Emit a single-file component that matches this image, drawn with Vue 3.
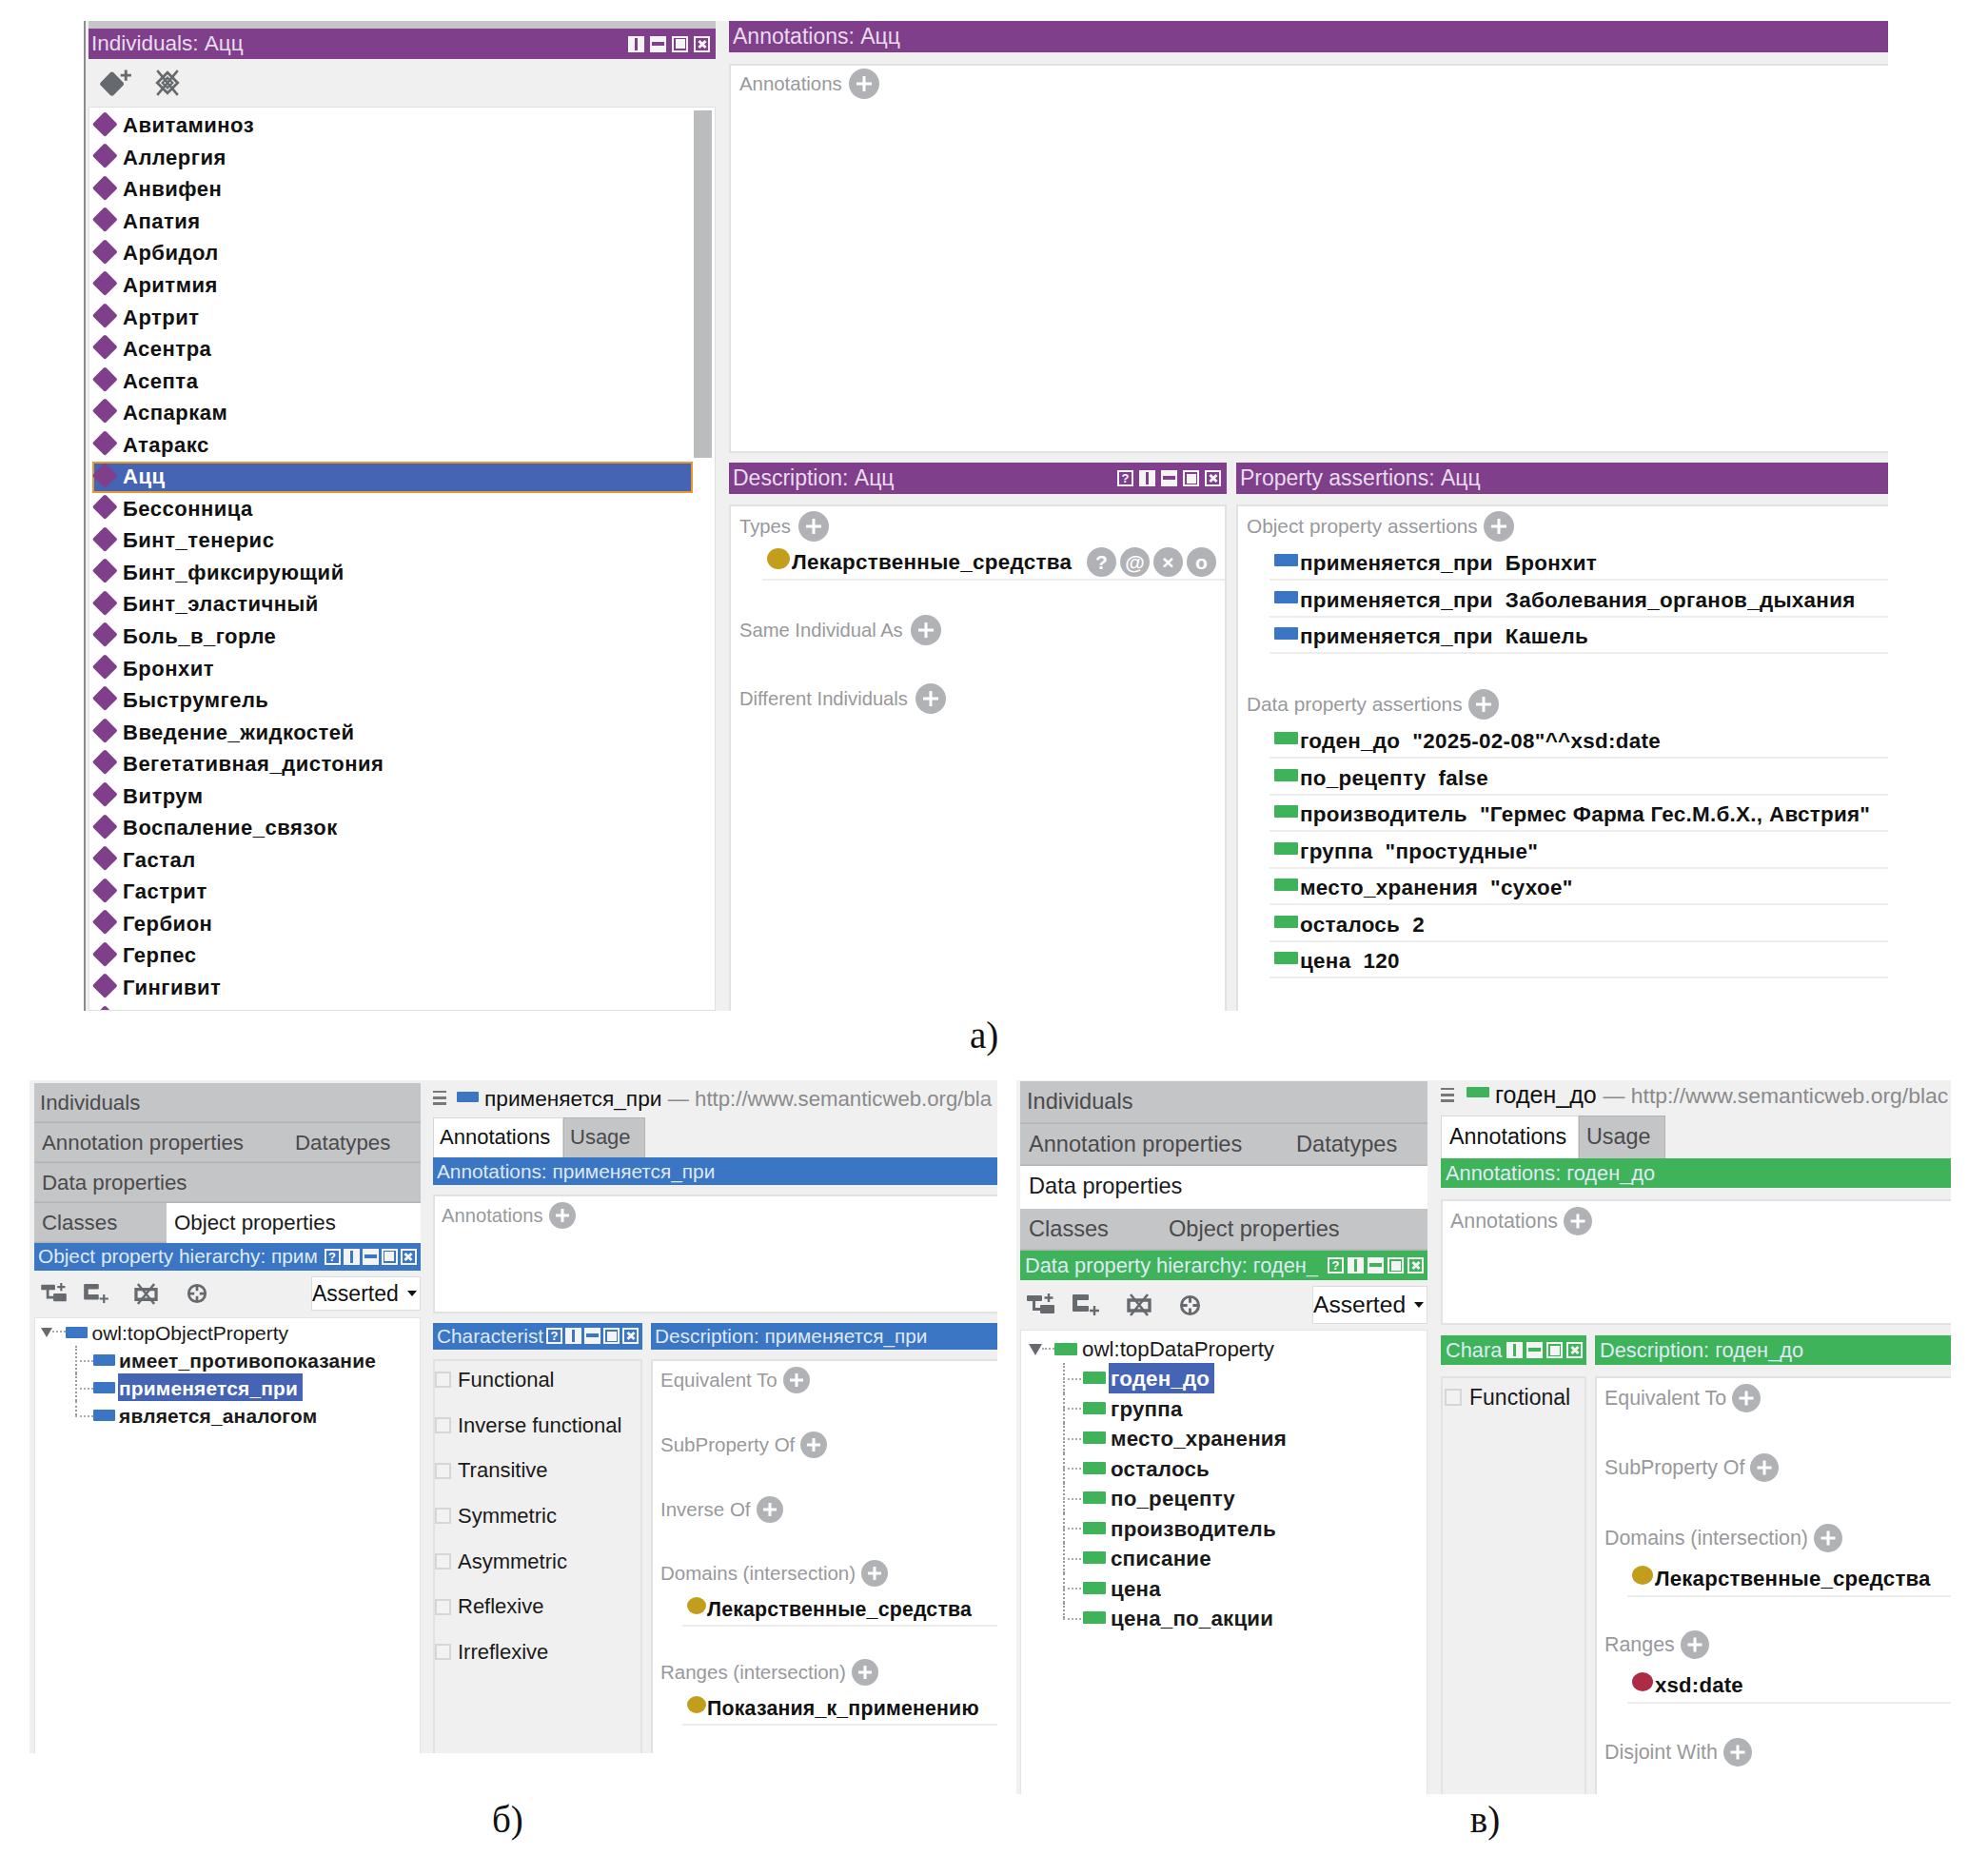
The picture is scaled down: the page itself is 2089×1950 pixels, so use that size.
<script setup>
const names = ['Авитаминоз','Аллергия','Анвифен','Апатия','Арбидол','Аритмия','Артрит','Асентра','Асепта','Аспаркам','Атаракс','Ацц','Бессонница','Бинт_тенерис','Бинт_фиксирующий','Бинт_эластичный','Боль_в_горле','Бронхит','Быструмгель','Введение_жидкостей','Вегетативная_дистония','Витрум','Воспаление_связок','Гастал','Гастрит','Гербион','Герпес','Гингивит','']

const dot = (t, kind = 'gold') => ({ kind, name: t })
const typePanel = [
  { label: 'Types', mt: 0, items: [{ ...dot('Лекарственные_средства'), btns: ['?', '@', '×', 'o'] }] },
  { label: 'Same Individual As', mt: 36, items: [] },
  { label: 'Different Individuals', mt: 40, items: [] }
]
const op = v => ({ kind: 'bar blue', name: 'применяется_при', val: v })
const dp = (n, v) => ({ kind: 'bar green', name: n, val: v })
const propPanel = [
  { label: 'Object property assertions', mt: 0, items: [op('Бронхит'), op('Заболевания_органов_дыхания'), op('Кашель')] },
  { label: 'Data property assertions', mt: 37, items: [dp('годен_до', '"2025-02-08"^^xsd:date'), dp('по_рецепту', 'false'), dp('производитель', '"Гермес Фарма Гес.М.б.Х., Австрия"'), dp('группа', '"простудные"'), dp('место_хранения', '"сухое"'), dp('осталось', '2'), dp('цена', '120')] }
]

const figs = [
  {
    cls: 'fig-b',
    tabs: [
      [{ t: 'Individuals' }],
      [{ t: 'Annotation properties', w: 266 }, { t: 'Datatypes' }],
      [{ t: 'Data properties' }],
      [{ t: 'Classes', w: 139 }, { t: 'Object properties', on: true }]
    ],
    hier: 'Object property hierarchy: прим',
    root: 'owl:topObjectProperty',
    barCls: 'blue',
    kids: ['имеет_противопоказание', 'применяется_при', 'является_аналогом'],
    sel: 'применяется_при',
    title: 'применяется_при',
    url: 'http://www.semanticweb.org/bla',
    charTitle: 'Characterist',
    charBtns: ['q', 'v', 'h', 'm', 'x'],
    chars: ['Functional', 'Inverse functional', 'Transitive', 'Symmetric', 'Asymmetric', 'Reflexive', 'Irreflexive'],
    secs: [
      { label: 'Equivalent To', mt: 0, items: [] },
      { label: 'SubProperty Of', mt: 38, items: [] },
      { label: 'Inverse Of', mt: 38, items: [] },
      { label: 'Domains (intersection)', mt: 37, items: [dot('Лекарственные_средства')] },
      { label: 'Ranges (intersection)', mt: 33, items: [dot('Показания_к_применению')] }
    ]
  },
  {
    cls: 'fig-v',
    tabs: [
      [{ t: 'Individuals' }],
      [{ t: 'Annotation properties', w: 281 }, { t: 'Datatypes' }],
      [{ t: 'Data properties', on: true }],
      [{ t: 'Classes', w: 147 }, { t: 'Object properties' }]
    ],
    hier: 'Data property hierarchy: годен_',
    root: 'owl:topDataProperty',
    barCls: 'green',
    kids: ['годен_до', 'группа', 'место_хранения', 'осталось', 'по_рецепту', 'производитель', 'списание', 'цена', 'цена_по_акции'],
    sel: 'годен_до',
    title: 'годен_до',
    url: 'http://www.semanticweb.org/blac',
    charTitle: 'Chara',
    charBtns: ['v', 'h', 'm', 'x'],
    chars: ['Functional'],
    secs: [
      { label: 'Equivalent To', mt: 0, items: [] },
      { label: 'SubProperty Of', mt: 43, items: [] },
      { label: 'Domains (intersection)', mt: 44, items: [dot('Лекарственные_средства')] },
      { label: 'Ranges', mt: 35, items: [dot('xsd:date', 'crimson')] },
      { label: 'Disjoint With', mt: 36, items: [] }
    ]
  }
]
const allBtns = ['v', 'h', 'm', 'x']
const qBtns = ['q', 'v', 'h', 'm', 'x']
</script>

<template>
  <div class="page">
    <div class="fig-a">
      <div class="a-left">
        <div class="strip"></div>
        <div class="hdr purple a-h1">
          <span class="hdr-t">Individuals: Ацц</span>
          <span class="wbs"><i v-for="b in allBtns" :key="b" :class="['wb', b]"></i></span>
        </div>
        <div class="a-tools">
          <svg class="t-dia" viewBox="0 0 32 26">
            <rect x="4.500" y="5.500" width="17" height="17" rx="2.500" transform="rotate(45 13 14)" fill="#666a6f" />
            <path d="M26 1v10M21 6h10" stroke="#666a6f" stroke-width="2.600" fill="none" />
          </svg>
          <svg class="t-del" viewBox="0 0 26 26">
            <path d="M13 3 23 13 13 23 3 13Z" fill="none" stroke="#666a6f" stroke-width="2.600" />
            <path d="M13 8 18 13 13 18 8 13Z" fill="none" stroke="#666a6f" stroke-width="2" />
            <path d="M3 1 23 25M23 1 3 25" stroke="#666a6f" stroke-width="2.400" />
          </svg>
        </div>
        <div class="a-list">
          <div class="a-rows">
            <div v-for="n in names" :key="n" class="a-row" :class="{ sel: n === 'Ацц' }">
              <i class="diamond"></i><span>{{ n }}</span>
            </div>
          </div>
          <div class="a-scroll"></div>
        </div>
      </div>
      <div class="a-right">
        <div class="hdr purple a-h2"><span class="hdr-t">Annotations: Ацц</span></div>
        <div class="panel a-ann">
          <div class="sec-label"><span>Annotations</span><i class="plus"></i></div>
        </div>
        <div class="a-cols">
          <div class="a-desc">
            <div class="hdr purple a-h2">
              <span class="hdr-t">Description: Ацц</span>
              <span class="wbs"><i v-for="b in qBtns" :key="b" :class="['wb', b]">{{ b === 'q' ? '?' : '' }}</i></span>
            </div>
            <div class="panel body">
              <section v-for="s in typePanel" :key="s.label" class="sec" :style="{ marginTop: s.mt + 'px' }">
                <div class="sec-label"><span>{{ s.label }}</span><i class="plus"></i></div>
                <div v-for="it in s.items" :key="it.name" class="item">
                  <i :class="it.kind"></i><b class="nm">{{ it.name }}</b>
                  <span class="rbtns"><i v-for="x in it.btns" :key="x" class="rbtn">{{ x }}</i></span>
                </div>
              </section>
            </div>
          </div>
          <div class="a-prop">
            <div class="hdr purple a-h2"><span class="hdr-t">Property assertions: Ацц</span></div>
            <div class="panel body">
              <section v-for="s in propPanel" :key="s.label" class="sec" :style="{ marginTop: s.mt + 'px' }">
                <div class="sec-label"><span>{{ s.label }}</span><i class="plus"></i></div>
                <div v-for="it in s.items" :key="it.name + it.val" class="item">
                  <i :class="it.kind"></i><b class="nm">{{ it.name }}</b><b class="val">{{ it.val }}</b>
                </div>
              </section>
            </div>
          </div>
        </div>
      </div>
    </div>
    <div class="cap cap-a">а)</div>

    <div class="row">
      <div v-for="f in figs" :key="f.cls" class="fig" :class="f.cls">
        <div class="col-l">
          <div class="tabs">
            <div v-for="(r, i) in f.tabs" :key="i" class="tab-row">
              <div v-for="c in r" :key="c.t" class="tab" :class="{ on: c.on }" :style="c.w ? { width: c.w + 'px' } : null">{{ c.t }}</div>
            </div>
          </div>
          <div class="hdr fh">
            <span class="hdr-t">{{ f.hier }}</span>
            <span class="wbs"><i v-for="b in qBtns" :key="b" :class="['wb', b]">{{ b === 'q' ? '?' : '' }}</i></span>
          </div>
          <div class="tools">
            <svg class="i1" viewBox="0 0 30 24">
              <path d="M1 2h14a1 1 0 0 1 1 1v4a1 1 0 0 1-1 1H9v7h5v-2a1 1 0 0 1 1-1h13a1 1 0 0 1 1 1v7a1 1 0 0 1-1 1H15a1 1 0 0 1-1-1v-2H6V8H1a1 1 0 0 1-1-1V3a1 1 0 0 1 1-1Z" fill="#666a6f" />
              <path d="M23 0v9M18.500 4.500h9" stroke="#666a6f" stroke-width="2.400" fill="none" />
            </svg>
            <svg class="i2" viewBox="0 0 30 24">
              <path d="M2 1h15a1 1 0 0 1 1 1v4a1 1 0 0 1-1 1H6v6h11a1 1 0 0 1 1 1v4a1 1 0 0 1-1 1H2a1 1 0 0 1-1-1V2a1 1 0 0 1 1-1Z" fill="#666a6f" />
              <path d="M24 13v10M19 18h10" stroke="#666a6f" stroke-width="2.400" fill="none" />
            </svg>
            <svg class="i3" viewBox="0 0 26 24">
              <path d="M2 7h22v11H2Z" fill="none" stroke="#666a6f" stroke-width="3.400" />
              <path d="M4 1 22 23M22 1 4 23" stroke="#666a6f" stroke-width="2.600" />
            </svg>
            <svg class="i4" viewBox="0 0 24 24">
              <circle cx="12" cy="12" r="9.500" fill="none" stroke="#666a6f" stroke-width="3" />
              <path d="M12 3v6M12 15v6M3 12h6M15 12h6" stroke="#666a6f" stroke-width="3" />
            </svg>
            <div class="combo"><span>Asserted</span><i class="caret"></i></div>
          </div>
          <div class="tree">
            <div class="root">
              <i class="tri"></i><i class="dash"></i><i class="bar" :class="f.barCls"></i><span class="root-t">{{ f.root }}</span>
            </div>
            <div v-for="k in f.kids" :key="k" class="kid">
              <i class="bar" :class="f.barCls"></i><b class="kid-t" :class="{ sel: k === f.sel }">{{ k }}</b>
            </div>
          </div>
        </div>

        <div class="col-r">
          <div class="titlebar">
            <i class="burger"></i><i class="bar" :class="f.barCls"></i>
            <span class="ttl">{{ f.title }} <span class="url">— {{ f.url }}</span></span>
          </div>
          <div class="etabs"><div class="etab on">Annotations</div><div class="etab">Usage</div></div>
          <div class="hdr fh rh"><span class="hdr-t">Annotations: {{ f.title }}</span></div>
          <div class="panel r-ann">
            <div class="sec-label"><span>Annotations</span><i class="plus"></i></div>
          </div>
          <div class="r-cols">
            <div class="r-char">
              <div class="hdr fh">
                <span class="hdr-t">{{ f.charTitle }}</span>
                <span class="wbs"><i v-for="b in f.charBtns" :key="b" :class="['wb', b]">{{ b === 'q' ? '?' : '' }}</i></span>
              </div>
              <div class="char-panel">
                <label v-for="c in f.chars" :key="c" class="chk"><i class="box"></i>{{ c }}</label>
              </div>
            </div>
            <div class="r-desc">
              <div class="hdr fh"><span class="hdr-t">Description: {{ f.title }}</span></div>
              <div class="panel body">
                <section v-for="s in f.secs" :key="s.label" class="sec" :style="{ marginTop: s.mt + 'px' }">
                  <div class="sec-label"><span>{{ s.label }}</span><i class="plus"></i></div>
                  <div v-for="it in s.items" :key="it.name" class="item">
                    <i :class="it.kind"></i><b class="nm">{{ it.name }}</b>
                  </div>
                </section>
              </div>
            </div>
          </div>
        </div>
      </div>
    </div>
    <div class="caps">
      <span class="cap cap-b">б)</span>
      <span class="cap cap-v">в)</span>
    </div>
  </div>
</template>

<style scoped>
.page {
  width: 2089px;
  height: 1950px;
  overflow: hidden;
  background: #fff;
  padding-top: 22px;
  box-sizing: border-box;
  font-family: "Liberation Sans", Arial, sans-serif;
  color: #111;
}
i { font-style: normal; display: block; flex: none; }

/* shared */
.hdr {
  display: flex;
  align-items: center;
  color: #dfe9f5;
  overflow: hidden;
  white-space: nowrap;
  flex: none;
}
.hdr-t { flex: 1; min-width: 0; overflow: hidden; }
.purple { background: #7f3f8b; color: #e8dcec; }
.wbs { display: flex; flex: none; }
.wb {
  width: 17px;
  height: 17px;
  box-sizing: border-box;
  border: 2px solid #f4f4f4;
  position: relative;
  color: #fff;
  font: bold 13px/13px "Liberation Sans", sans-serif;
  text-align: center;
}
.wb.v { background: linear-gradient(90deg, #f4f4f4 0 5px, transparent 5px 8px, #f4f4f4 8px); }
.wb.h { background: linear-gradient(180deg, #f4f4f4 0 4px, transparent 4px 8px, #f4f4f4 8px); }
.wb.m::after { content: ""; position: absolute; inset: 1.500px; background: #f4f4f4; }
.wb.x::before, .wb.x::after {
  content: "";
  position: absolute;
  left: 1.500px;
  right: 1.500px;
  top: 5px;
  height: 3px;
  background: #f4f4f4;
  transform: rotate(45deg);
}
.wb.x::after { transform: rotate(-45deg); }

.panel {
  background: #fff;
  border: 2px solid #e2e2e2;
  box-sizing: border-box;
}
.sec-label {
  display: flex;
  align-items: center;
  color: #98999c;
}
.plus {
  border-radius: 50%;
  background: #b1b2b6;
  position: relative;
}
.plus::before, .plus::after {
  content: "";
  position: absolute;
  background: #fff;
  left: 50%;
  top: 50%;
  width: 50%;
  height: 3px;
  transform: translate(-50%, -50%);
}
.plus::after { width: 3px; height: 50%; }
.item { display: flex; align-items: center; border-bottom: 2px solid #ededed; box-sizing: border-box; }
.nm, .val { white-space: nowrap; }
.gold, .crimson { border-radius: 50%; background: #c39d1c; }
.crimson { background: #ad2b45; }
.bar { background: #3a76c4; border-radius: 1px; }
.bar.blue { background: #3a76c4; }
.bar.green { background: #3fb35a; }

/* figure a */
.fig-a {
  margin-left: 88px;
  width: 1896px;
  height: 1040px;
  box-sizing: border-box;
  border-left: 2px solid #8b8b8b;
  background: #f0f0f0;
  padding-left: 3px;
  display: flex;
  gap: 14px;
  overflow: hidden;
}
.a-left { width: 659px; flex: none; display: flex; flex-direction: column; }
.strip { height: 8px; background: #c4c5c7; flex: none; }
.hdr.a-h1 { height: 32px; font-size: 22.500px; padding: 0 3px; }
.a-h1 .wbs { gap: 6px; margin-right: 3px; }
.a-tools { height: 50px; flex: none; display: flex; align-items: center; padding-left: 10px; gap: 25px; }
.t-dia { width: 36px; height: 30px; }
.t-del { width: 28px; height: 28px; margin-left: -2px; }
.a-list {
  flex: 1;
  min-height: 0;
  background: #fff;
  border: 1.500px solid #e0e0e0;
  display: flex;
  padding-top: 2.500px;
  overflow: hidden;
}
.a-rows { width: 634px; flex: none; }
.a-row {
  height: 33.550px;
  display: flex;
  align-items: center;
  padding-left: 32px;
  margin-left: 3px;
  font-size: 22px;
  font-weight: bold;
  letter-spacing: 0.500px;
  position: relative;
  box-sizing: border-box;
}
.a-row.sel { background: #4564b4; color: #fff; outline: 2px solid #e8982e; outline-offset: -2px; }
.diamond {
  width: 18.500px;
  height: 18.500px;
  background: #7f3f8b;
  border-radius: 2px;
  transform: rotate(45deg);
  margin-left: -28px;
  margin-right: 9.500px;
  margin-top: -5px;
}
.a-scroll { width: 19px; height: 365px; background: #bbbcbe; margin-left: 1px; flex: none; }
.a-right { flex: 1; min-width: 0; display: flex; flex-direction: column; }
.hdr.a-h2 { height: 33px; font-size: 23px; padding: 0 4px; }
.a-ann { height: 409px; margin-top: 12px; padding: 3px 0 0 9px; flex: none; border-right: 0; }
.a-ann .sec-label { height: 32px; font-size: 20.400px; gap: 7px; }
.a-desc .sec-label { height: 32px; font-size: 20.200px; gap: 8px; }
.a-prop .sec-label { height: 32px; font-size: 20.800px; gap: 6px; }
.fig-a .plus { width: 32px; height: 32px; }
.a-cols { display: flex; gap: 10px; margin-top: 10px; flex: 1; min-height: 0; }
.a-desc { width: 523px; flex: none; display: flex; flex-direction: column; }
.a-prop { flex: 1; min-width: 0; display: flex; flex-direction: column; }
.a-desc .wbs, .a-h2 .wbs { gap: 6px; margin-right: 2px; }
.a-desc .body, .a-prop .body { margin-top: 11px; flex: 1; padding: 5px 0 0 9px; border-bottom: 0; border-right: 0; }
.a-desc .body { border-right: 2px solid #e2e2e2; }
.a-desc .item, .a-prop .item { height: 38.500px; padding-top: 4px; margin-left: 24px; font-size: 22.400px; letter-spacing: 0.300px; }
.a-desc .item { height: 41px; padding-left: 5px; }
.a-prop .item { padding-left: 5px; padding-top: 5px; }
.a-prop .sec-label + .item { margin-top: 2.500px; }
.a-desc .gold { width: 24px; height: 22px; margin-top: -8px; margin-right: 2px; }
.fig-a .bar { width: 25px; height: 13px; margin-top: -7px; margin-right: 2px; }
.a-prop .val { margin-left: 13px; }
.rbtns { margin-left: auto; display: flex; gap: 4px; margin-right: 9px; margin-top: 0; }
.rbtn {
  width: 31px;
  height: 31px;
  border-radius: 50%;
  background: #b1b2b6;
  color: #fff;
  font: bold 21px/31px "Liberation Sans", sans-serif;
  text-align: center;
  letter-spacing: 0;
}

/* caption */
.cap { font-family: "Liberation Serif", "Times New Roman", serif; font-size: 39px; color: #111; }
.cap-a { height: 73px; line-height: 52px; margin-left: 1019px; }

/* figures b, v */
.row { display: flex; gap: 20px; margin-left: 31px; align-items: flex-start; height: 750px; }
.fig { display: flex; background: #f0f0f0; box-sizing: border-box; overflow: hidden; flex: none; }
.fig-b { width: 1017px; height: 707px; padding-left: 5px; --c: #3a76c4; }
.fig-v { width: 982px; height: 750px; padding-left: 4px; --c: #3fb35a; }
.col-l { flex: none; display: flex; flex-direction: column; }
.fig-b .col-l { width: 405.500px; margin-right: 13.500px; padding-top: 3px; }
.fig-v .col-l { width: 428px; margin-right: 14px; padding-top: 1px; }
.tabs { flex: none; }
.tab-row { display: flex; background: #c4c5c7; box-shadow: inset 0 -1.500px 0 #b2b3b5; height: 42px; }
.fig-v .tab-row { height: 44.500px; }
.tab { flex: none; color: #4a4a4c; padding-left: 8px; box-sizing: border-box; line-height: 41.500px; white-space: nowrap; }
.fig-b .tab { font-size: 22.300px; }
.fig-v .tab { font-size: 23.600px; padding-left: 9px; line-height: 42.500px; }
.fig-b .tab-row:first-child .tab { padding-left: 6px; }
.fig-v .tab-row:first-child .tab { padding-left: 7px; }
.tab.on { background: #fff; color: #1a1a1a; flex: 1; }
.fh { background: var(--c); }
.fig-b .fh { height: 28.500px; font-size: 20.800px; padding-left: 4px; }
.fig-v .fh { height: 31px; font-size: 21.800px; padding-left: 5px; }
.fig-b .wbs { gap: 3px; margin-right: 4px; }
.fig-v .wbs { gap: 4px; margin-right: 4px; }
.tools { display: flex; align-items: center; flex: none; }
.fig-b .tools { height: 49px; padding-left: 7px; }
.fig-v .tools { height: 52px; padding-left: 7px; }
.fig-b .i1, .fig-b .i2 { width: 28px; height: 22px; }
.fig-b .i2 { margin-left: 16px; }
.fig-b .i3 { width: 25px; height: 23px; margin-left: 26px; }
.fig-b .i4 { width: 22px; height: 22px; margin-left: 30px; }
.fig-v .i1, .fig-v .i2 { width: 30px; height: 24px; }
.fig-v .i2 { margin-left: 17px; }
.fig-v .i3 { width: 26px; height: 24px; margin-left: 28px; }
.fig-v .i4 { width: 23px; height: 23px; margin-left: 29px; }
.combo {
  margin-left: auto;
  background: #fff;
  border: 1.500px solid #dcdcdc;
  box-sizing: border-box;
  display: flex;
  align-items: center;
  justify-content: space-between;
  color: #111;
  padding-right: 3px;
}
.fig-b .combo { width: 114.500px; height: 36px; font-size: 23px; }
.fig-v .combo { width: 121px; height: 40px; font-size: 24.600px; }
.caret { width: 0; height: 0; border: 5.500px solid transparent; border-top: 6px solid #111; border-bottom: 0; }
.tree { flex: 1; min-height: 0; background: #fff; border: 1.500px solid #e4e4e4; border-bottom: 0; box-sizing: border-box; color: #1a1a1a; }
.root { display: flex; align-items: center; }
.tri { width: 0; height: 0; border-style: solid; border-color: #666a6f transparent transparent; }
.dash { border-top: 2px dotted #aaa; }
.root-t { white-space: nowrap; }
.kid { display: flex; align-items: center; position: relative; }
.kid::before {
  content: "";
  position: absolute;
  top: 0;
  bottom: 0;
  border-left: 2px dotted #9a9a9a;
  left: var(--line);
}
.kid:last-child::before { bottom: 50%; }
.kid::after {
  content: "";
  position: absolute;
  top: 50%;
  left: var(--line);
  width: 19px;
  border-top: 2px dotted #aaa;
}
.kid-t { white-space: nowrap; box-sizing: border-box; }
.kid-t.sel { background: #4564b4; color: #fff; }

.fig-b .tree { padding-top: 3px; --line: 42px; }
.fig-b .root { height: 26.500px; padding-left: 6px; font-size: 21px; }
.fig-b .tri { border-width: 10px 6px 0; margin-top: -2px; }
.fig-b .dash { width: 14px; margin-top: -3px; }
.fig-b .root .bar { width: 23px; height: 12px; margin: -2px 4.500px 0 0; }
.fig-b .kid { height: 29px; padding-left: 61px; }
.fig-b .kid .bar { width: 23px; height: 12px; margin-right: 3px; }
.fig-b .kid-t { height: 29px; line-height: 32px; font-size: 20.900px; padding: 0 5px 0 1px; letter-spacing: 0.200px; }

.fig-v .tree { padding-top: 6px; --line: 44px; }
.fig-v .root { height: 28px; padding-left: 8px; font-size: 22.300px; }
.fig-v .tri { border-width: 12px 7px 0; }
.fig-v .dash { width: 13px; margin-top: -3px; }
.fig-v .root .bar { width: 24px; height: 13px; margin: -2px 5px 0 0; }
.fig-v .kid { height: 31.500px; padding-left: 65px; }
.fig-v .kid .bar { width: 24px; height: 13px; margin-right: 3px; }
.fig-v .kid-t { height: 31.500px; line-height: 34px; font-size: 22.300px; padding: 0 5px 0 2px; letter-spacing: 0.200px; }

.col-r { flex: 1; min-width: 0; display: flex; flex-direction: column; }
.titlebar { display: flex; align-items: center; flex: none; overflow: hidden; white-space: nowrap; }
.burger {
  width: 20px;
  height: 15px;
  background: repeating-linear-gradient(180deg, #77787a 0 2.500px, transparent 2.500px 6.200px);
  margin-left: -6px;
}
.ttl { color: #111; }
.url { color: #8a8a8c; }
.fig-b .titlebar { height: 39px; }
.fig-b .burger { margin-right: 11px; margin-top: -2px; }
.fig-b .titlebar .bar { width: 23px; height: 11px; margin-right: 6px; margin-top: -5px; }
.fig-b .ttl { font-size: 22.700px; }
.fig-b .url { font-size: 22.200px; }
.fig-v .titlebar { height: 37px; }
.fig-v .burger { margin-right: 13px; margin-top: -7px; }
.fig-v .titlebar .bar { width: 24px; height: 11px; margin-right: 6px; margin-top: -13px; }
.fig-v .ttl { font-size: 25px; margin-top: -7px; }
.fig-v .url { font-size: 22.900px; }
.etabs { display: flex; flex: none; }
.etab {
  background: #c4c5c7;
  color: #4a4a4c;
  box-sizing: border-box;
  border: 1.500px solid #b2b3b5;
  border-bottom: 0;
}
.etab.on { background: #fff; color: #111; border-color: #d8d8d8; }
.fig-b .etab { height: 42px; line-height: 40px; font-size: 22px; padding-left: 6px; width: 86px; }
.fig-b .etab.on { width: 137px; }
.fig-v .etab { height: 45px; line-height: 43px; font-size: 23.300px; padding-left: 7px; width: 91px; }
.fig-v .etab.on { width: 145px; padding-left: 8px; }
.fig-b .rh { height: 29px; }
.r-ann { flex: none; border-right: 0; }
.fig-b .r-ann { height: 125px; margin-top: 10px; padding: 5px 0 0 7px; }
.fig-v .r-ann { height: 132px; margin-top: 12px; padding: 6px 0 0 8px; }
.r-cols { display: flex; flex: 1; min-height: 0; }
.fig-b .r-cols { gap: 9px; margin-top: 9.500px; }
.fig-v .r-cols { gap: 9px; margin-top: 11px; }
.r-char, .r-desc { display: flex; flex-direction: column; min-width: 0; }
.fig-b .r-char { width: 220px; flex: none; }
.fig-v .r-char { width: 153px; flex: none; }
.r-desc { flex: 1; }
.char-panel { flex: 1; border: 2px solid #e2e2e2; border-bottom: 0; box-sizing: border-box; display: flex; flex-direction: column; }
.chk { display: flex; align-items: center; color: #1a1a1a; white-space: nowrap; }
.box { background: #f2f2f2; border: 2px solid #d6d6d6; box-sizing: border-box; }
.fig-b .char-panel { margin-top: 10px; }
.fig-b .chk { height: 47.700px; font-size: 22px; padding-left: 0; flex: none; }
.fig-b .chk:first-child { margin-top: -4px; }
.fig-b .box { width: 17px; height: 17px; margin-right: 7px; }
.fig-v .char-panel { margin-top: 12px; padding-top: 4px; }
.fig-v .chk { height: 32px; font-size: 23px; padding-left: 2px; }
.fig-v .box { width: 18px; height: 18px; margin-right: 8px; }
.fig-b .body, .fig-v .body { flex: 1; border-bottom: 0; border-right: 0; box-sizing: border-box; }
.fig-b .body { margin-top: 10px; padding: 5px 0 0 8px; }
.fig-v .body { margin-top: 12px; padding: 6px 0 0 8px; }
.fig-b .sec-label { height: 30px; font-size: 20.500px; gap: 6px; }
.fig-b .plus { width: 28px; height: 28px; }
.fig-b .r-ann .sec-label { font-size: 20.200px; height: 30px; }
.fig-v .sec-label { height: 30px; font-size: 21.400px; gap: 6px; }
.fig-v .plus { width: 30px; height: 30px; }
.fig-b .item { height: 41px; margin-left: 23px; padding: 7px 0 0 6px; font-size: 21.300px; letter-spacing: 0.200px; }
.fig-v .item { height: 47px; margin-left: 24px; padding: 10px 0 0 6px; font-size: 22.200px; letter-spacing: 0.200px; }
.fig-b .gold { width: 20px; height: 18px; margin: -8px 1px 0 -1px; }
.fig-v .gold, .fig-v .crimson { width: 22px; height: 20px; margin: -8px 2px 0 -1px; }

.caps { display: flex; height: 54px; line-height: 54px; }
.cap-b { margin-left: 517px; }
.cap-v { margin-left: 995px; }
</style>
